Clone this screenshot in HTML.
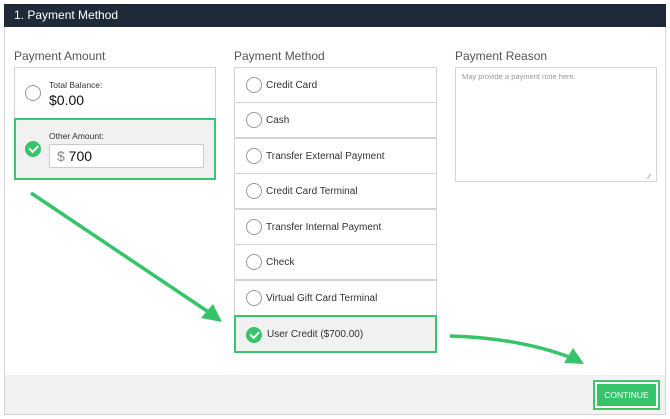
<!DOCTYPE html>
<html><head><style>
*{box-sizing:border-box;margin:0;padding:0}
body{width:670px;height:419px;background:#fff;font-family:"Liberation Sans",sans-serif;position:relative;overflow:hidden;color:#222}
.frame{position:absolute;left:4px;top:4px;width:662px;height:411px;border:1px solid #d4d4d4;background:#fff}
.hdr{position:absolute;left:4px;top:4px;width:662px;height:23px;background:#1e2a38;color:#fff;font-size:12px;line-height:23px;padding-left:10px}
.foot{position:absolute;left:5px;top:375px;width:660px;height:39px;background:#f2f2f2}
.lbl{position:absolute;font-size:12px;color:#555}
.box{position:absolute;border:1px solid #d4d4d4;background:#fff}
.rad{position:absolute;width:16px;height:16px;border:1px solid #999;border-radius:50%;background:#fff}
.chk{position:absolute;width:16px;height:16px;border-radius:50%;background:#35c46a}
.chk:after{content:"";position:absolute;left:4px;top:4px;width:7px;height:3.5px;border-left:2px solid #fff;border-bottom:2px solid #fff;transform:rotate(-45deg)}
.row{position:absolute;left:234px;width:203px;height:36px;border:1px solid #d4d4d4;background:#fff;font-size:10px;color:#333}
.row span{position:absolute;left:31px;top:12px}
.row .rad{left:11px;top:9px}
</style></head><body>
<div class="frame"></div>
<div class="hdr">1. Payment Method</div>
<div class="foot"></div>

<div class="lbl" style="left:14px;top:49px">Payment Amount</div>
<div class="lbl" style="left:234px;top:49px">Payment Method</div>
<div class="lbl" style="left:455px;top:49px">Payment Reason</div>

<div class="box" style="left:14px;top:67px;width:202px;height:113px"></div>
<div class="rad" style="left:25px;top:85px"></div>
<div style="position:absolute;left:49px;top:80px;font-size:8.5px;color:#333">Total Balance:</div>
<div style="position:absolute;left:49px;top:92px;font-size:14px;color:#111">$0.00</div>
<div style="position:absolute;left:14px;top:118px;width:202px;height:62px;background:#f1f1f1;border:2px solid #3cc46e"></div>
<div class="chk" style="left:25px;top:141px"></div>
<div style="position:absolute;left:49px;top:131px;font-size:8.5px;color:#333">Other Amount:</div>
<div style="position:absolute;left:49px;top:144px;width:155px;height:24px;background:#fff;border:1px solid #ccc;font-size:14px;line-height:22px;padding-left:7px;color:#111"><span style="color:#888">$</span> 700</div>

<div class="row" style="top:67px"><div class="rad"></div><span>Credit Card</span></div>
<div class="row" style="top:102px"><div class="rad"></div><span>Cash</span></div>
<div class="row" style="top:138px"><div class="rad"></div><span>Transfer External Payment</span></div>
<div class="row" style="top:173px"><div class="rad"></div><span>Credit Card Terminal</span></div>
<div class="row" style="top:209px"><div class="rad"></div><span>Transfer Internal Payment</span></div>
<div class="row" style="top:244px"><div class="rad"></div><span>Check</span></div>
<div class="row" style="top:280px"><div class="rad"></div><span>Virtual Gift Card Terminal</span></div>
<div class="row" style="top:315px;background:#f1f1f1;border:2px solid #3cc46e;height:38px"><div class="chk" style="left:10px;top:10px"></div><span style="top:12px">User Credit ($700.00)</span></div>

<div class="box" style="left:455px;top:67px;width:202px;height:115px"></div>
<div style="position:absolute;left:462px;top:72px;font-size:7.5px;color:#999">May provide a payment note here.</div>
<div style="position:absolute;left:648px;top:174px;font-size:7px;color:#999">⁄⁄</div>

<div style="position:absolute;left:593px;top:380px;width:67px;height:30px;border:2px solid #3cc46e;padding:2px;background:#fff">
<div style="width:100%;height:100%;background:#35c46a;color:#fff;font-size:8.5px;text-align:center;line-height:22px">CONTINUE</div></div>

<svg width="670" height="419" style="position:absolute;left:0;top:0">
<line x1="31" y1="193" x2="210" y2="313" stroke="#35c46a" stroke-width="3.5"/>
<polygon points="222,322 201,318 213,304" fill="#35c46a"/>
<path d="M450 336 Q520 338 572 358" fill="none" stroke="#35c46a" stroke-width="3.5"/>
<polygon points="584,364 564,363 573,348" fill="#35c46a"/>
</svg>
</body></html>
